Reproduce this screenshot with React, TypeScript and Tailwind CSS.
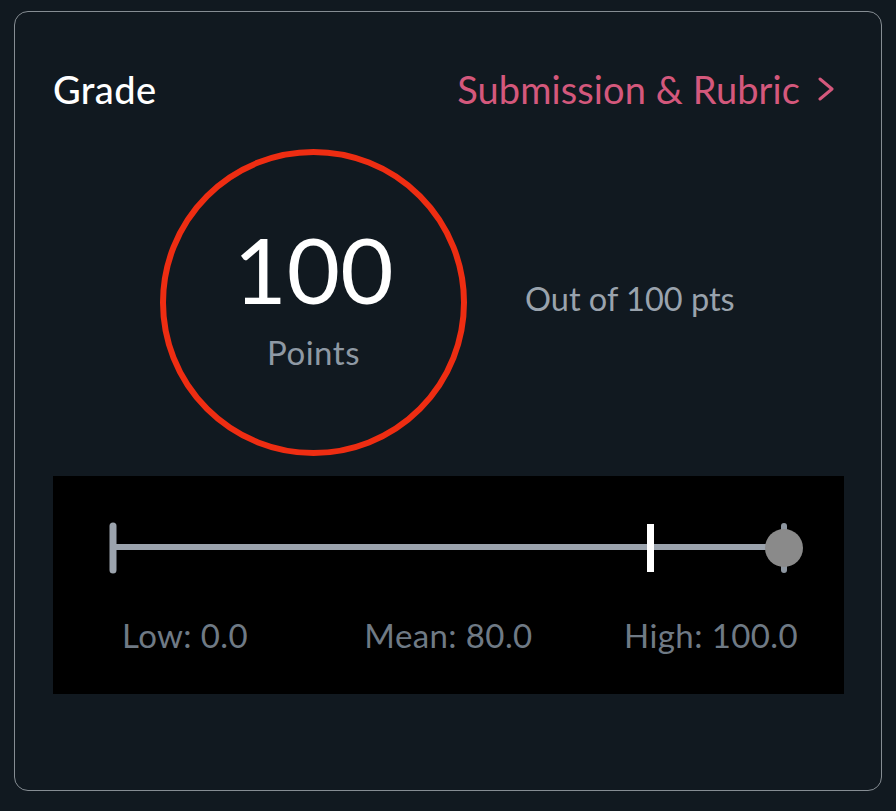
import React from "react";

export default function App() {
  return (
    <div
      className="w-[896px] h-[811px] bg-[#111920] pt-[11px] pl-[14px]"
      style={{ fontFamily: "Lato, 'Noto Sans', sans-serif" }}
    >
      <div className="w-[868px] h-[780px] rounded-[14px] border-[1.5px] border-[#868d93] pt-[54px] pl-[38px] pr-[37px]">
        {/* Header */}
        <div className="flex items-center justify-between h-[46px]">
          <span className="text-[38px] leading-[46px] font-medium tracking-[0.4px] text-white">Grade</span>
          <div className="flex items-center pr-[9px]">
            <span className="text-[38px] leading-[46px] tracking-[0.1px] text-[#d4587c]">Submission &amp; Rubric</span>
            <svg width="18" height="24" viewBox="0 0 18 24" className="ml-[17px]">
              <polyline
                points="3,2 15,12 3,22"
                fill="none"
                stroke="#d4587c"
                strokeWidth="3"
                strokeLinecap="round"
                strokeLinejoin="round"
              />
            </svg>
          </div>
        </div>

        {/* Circle row */}
        <div className="flex items-center mt-[37px] pl-[107px]">
          <div className="w-[307px] h-[307px] rounded-full border-[6px] border-[#ee2d12] flex flex-col items-center pt-[68px]">
            <span className="text-[92px] leading-[92px] text-white">100</span>
            <span className="text-[33px] leading-[33px] tracking-[0.5px] text-[#8f99a4] mt-[21px]">Points</span>
          </div>
          <span className="ml-[58px] mb-[9px] text-[32.5px] leading-[39px] text-[#9aa3ad]">Out of 100 pts</span>
        </div>

        {/* Stats box */}
        <div className="mt-[20px] w-[791px] h-[218px] bg-black pt-[41px]">
          <svg width="791" height="60" viewBox="0 0 791 60" className="block">
            <line x1="60" y1="30" x2="731" y2="30" stroke="#9ba3ad" strokeWidth="6" />
            <line x1="60" y1="9" x2="60" y2="53" stroke="#9ba3ad" strokeWidth="7" strokeLinecap="round" />
            <line x1="731" y1="9" x2="731" y2="53" stroke="#8d96a0" strokeWidth="6" strokeLinecap="round" />
            <rect x="594" y="7" width="7" height="48" fill="#ffffff" />
            <circle cx="731" cy="31" r="19" fill="#8a8a8a" />
          </svg>
          <div className="grid grid-cols-[1fr_auto_1fr] items-center mt-[38px] text-[33px] leading-[40px] tracking-[0.4px] text-[#6f7a85]">
            <span className="justify-self-start pl-[69px]">Low: 0.0</span>
            <span>Mean: 80.0</span>
            <span className="justify-self-end pr-[46px]">High: 100.0</span>
          </div>
        </div>
      </div>
    </div>
  );
}
